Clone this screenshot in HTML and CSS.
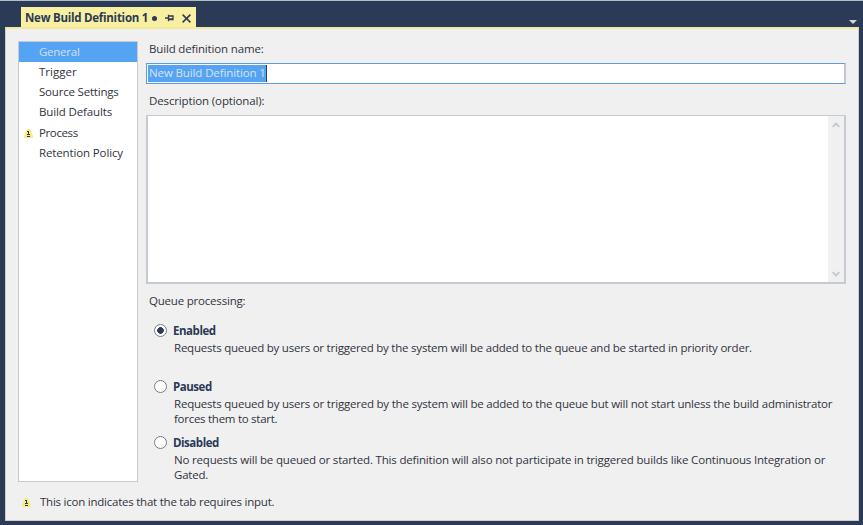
FILE: index.html
```html
<!DOCTYPE html>
<html lang="en">
<head>
<meta charset="utf-8">
<title>New Build Definition 1</title>
<link rel="stylesheet" href="styles.css">
</head>
<body>
<header class="tabbar">
  <div class="tab">
    <span class="tab-title">New Build Definition 1</span>
    <span class="dirty"></span>
    <svg class="pin" width="9" height="8" viewBox="0 0 9 8"><path d="M0 4h3M3.5 0.8v6.4M3.5 2h4.5v3.5h-4.5M3.5 5h4.5" /></svg>
    <svg class="close" width="9" height="9" viewBox="0 0 9 9"><path d="M.6.6l7.8 7.8M8.4.6L.6 8.4" /></svg>
  </div>
  <svg class="overflow" width="8" height="4" viewBox="0 0 8 4"><path d="M0 0h8L4 4z" /></svg>
</header>
<main class="panel">
  <div class="columns">
    <nav class="sidebar">
      <a class="item selected"><span class="t-general">General</span></a>
      <a class="item"><span class="t-trigger">Trigger</span></a>
      <a class="item"><span class="t-source">Source Settings</span></a>
      <a class="item"><span class="t-defaults">Build Defaults</span></a>
      <a class="item"><svg class="warn" width="9" height="9" viewBox="0 0 9 9"><path class="warn-bg" d="M3 0h3L9 7V9H0V7z" /><path class="warn-mark" d="M3 2h2v3h1v1H3V5h1V3H3zM3 7h3v1H3z" /></svg><span class="t-process">Process</span></a>
      <a class="item"><span class="t-retention">Retention Policy</span></a>
    </nav>
    <section class="form">
      <div class="label"><span class="t-name">Build definition name:</span></div>
      <div class="input"><span class="selection"><span class="t-value">New Build Definition 1</span></span></div>
      <div class="label label-desc"><span class="t-desc">Description (optional):</span></div>
      <div class="textarea">
        <div class="scroll">
          <svg width="8" height="6" viewBox="0 0 8 6"><path d="M.7 4.800L4 1.500l3.300 3.300" /></svg>
          <svg width="8" height="6" viewBox="0 0 8 6"><path d="M.7 1.200L4 4.500l3.300-3.300" /></svg>
        </div>
      </div>
      <div class="label label-queue"><span class="t-queue">Queue processing:</span></div>
      <div class="option">
        <span class="radio checked"></span>
        <div class="option-body">
          <div class="option-title"><span class="t-enabled">Enabled</span></div>
          <div class="line"><span class="t-e1">Requests queued by users or triggered by the system will be added to the queue and be started in priority order.</span></div>
        </div>
      </div>
      <div class="option">
        <span class="radio"></span>
        <div class="option-body">
          <div class="option-title"><span class="t-paused">Paused</span></div>
          <div class="line"><span class="t-p1">Requests queued by users or triggered by the system will be added to the queue but will not start unless the build administrator</span></div>
          <div class="line"><span class="t-p2">forces them to start.</span></div>
        </div>
      </div>
      <div class="option">
        <span class="radio"></span>
        <div class="option-body">
          <div class="option-title"><span class="t-disabled">Disabled</span></div>
          <div class="line"><span class="t-d1">No requests will be queued or started. This definition will also not participate in triggered builds like Continuous Integration or</span></div>
          <div class="line"><span class="t-d2">Gated.</span></div>
        </div>
      </div>
    </section>
  </div>
  <footer class="legend">
    <svg width="9" height="9" viewBox="0 0 9 9"><path class="warn-bg" d="M3 0h3L9 7V9H0V7z" /><path class="warn-mark" d="M3 2h2v3h1v1H3V5h1V3H3zM3 7h3v1H3z" /></svg>
    <span class="t-legend">This icon indicates that the tab requires input.</span>
  </footer>
</main>
</body>
</html>
```

FILE: styles.css
```css
* { box-sizing: border-box; }
body {
  margin: 0;
  width: 863px;
  height: 525px;
  overflow: hidden;
  padding: 0 4px 0 5px;
  background: #2b3a56;
  border-top: 1px solid #b5bfc0;
  color: #303440;
  font: 11.5px/16px "Open Sans", "Noto Sans", sans-serif;
  letter-spacing: -0.2px;
  white-space: nowrap;
}
svg { display: block; flex: none; }

.tabbar {
  height: 26px;
  padding: 6px 2px 0 16px;
  display: flex;
  align-items: flex-end;
  justify-content: space-between;
}
.tab {
  width: 175px;
  height: 20px;
  padding: 2px 4px 0;
  display: flex;
  align-items: center;
  background: #f8f0a0;
  color: #2b3a56;
}
.tab-title { width: 124px; font-weight: 700; letter-spacing: -0.25px; }
.dirty { width: 5px; height: 5px; margin: 0 8px 0 3px; border-radius: 50%; background: #2b3a56; flex: none; }
.pin { margin-right: 8px; }
.pin path { fill: none; stroke: #2b3a56; stroke-width: 1.3; }
.close path { fill: none; stroke: #2b3a56; stroke-width: 1.5; }
.overflow { margin-bottom: 3px; }
.overflow path { fill: #d5d6d2; }

.panel {
  height: 494px;
  padding: 12px 12px 0 12px;
  background: #f0f0f0;
  border: 1px solid #cfcfc4;
  border-top: 2px solid #f3e99b;
}
.columns { height: 441px; display: flex; gap: 8px; }
.sidebar {
  width: 120px;
  height: 441px;
  background: #fff;
  border: 1px solid #c6c9d2;
}
.item {
  height: 20.2px;
  padding-left: 20px;
  display: flex;
  align-items: center;
}
.selected { background: #55a3f3; color: #cfe0f0; height: 20px; }
.warn { margin: 1px 6px 0 -15px; }
.warn-bg { fill: #f5ec86; }
.warn-mark { fill: #2b3a56; }

.form { width: 700px; }
.label { height: 22px; padding-left: 3px; }
.input {
  height: 21px;
  padding: 1px;
  background: #fff;
  border: 1px solid #5b9bdc;
  border-right: 2px solid #c3c8d0;
}
.selection {
  display: block;
  width: 119px;
  height: 17px;
  padding-left: 1px;
  background: #55a3f3;
  border-right: 1px solid #2b3a56;
  color: #d5e3ef;
}
.label-desc { height: 31px; padding-top: 9px; }
.textarea {
  height: 169px;
  display: flex;
  justify-content: flex-end;
  background: #fff;
  border: 2px solid #c6cad2;
  border-top-width: 1px;
}
.scroll {
  width: 16px;
  padding: 6px 4px 5px;
  display: flex;
  flex-direction: column;
  justify-content: space-between;
  background: #f0f0f0;
}
.scroll path { fill: none; stroke: #c3c7cf; stroke-width: 1.8; }
.label-queue { height: 39px; padding-top: 9px; }
.option { height: 56px; padding-left: 8px; display: flex; gap: 6px; }
.radio {
  width: 13px;
  height: 13px;
  margin-top: 1px;
  border: 1px solid #777b82;
  border-radius: 50%;
  background: #fff;
  flex: none;
}
.checked { background: radial-gradient(circle, #2b3a56 0 3px, #fff 3.600px); }
.option-title { height: 17px; font-weight: 700; color: #2b3a56; letter-spacing: -0.46px; }
.line { height: 15.400px; line-height: 16px; padding-left: 1px; }

.t-general { letter-spacing: -0.25px; }
.t-trigger { letter-spacing: 0; }
.t-defaults, .t-retention, .t-desc { letter-spacing: -0.13px; }
.t-process { letter-spacing: -0.38px; }
.t-name { letter-spacing: -0.16px; }
.t-value { letter-spacing: -0.12px; }
.t-e1 { letter-spacing: -0.22px; }
.t-p1 { letter-spacing: -0.212px; }
.t-p2 { letter-spacing: -0.27px; }
.t-d1 { letter-spacing: -0.175px; }
.t-legend { letter-spacing: -0.235px; }

.legend { height: 40px; padding-left: 4px; display: flex; align-items: center; gap: 9px; }
```
